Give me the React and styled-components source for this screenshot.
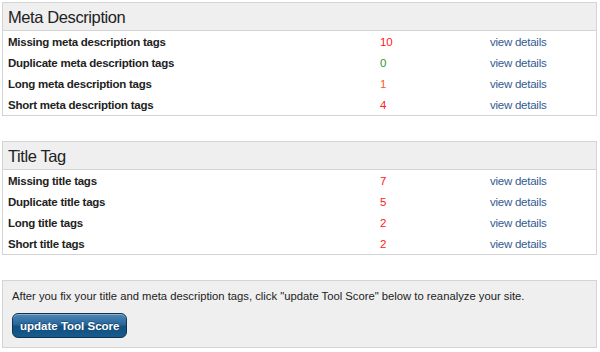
import React from "react";
import styled, { createGlobalStyle } from "styled-components";

const Global = createGlobalStyle`
  html, body { margin: 0; padding: 0; background: #fff; }
  body { font-family: "Liberation Sans", Arial, Helvetica, sans-serif; color: #222; }
`;

const Page = styled.div`
  padding: 2px 3px 0 2px;
  display: flex;
  flex-direction: column;
  gap: 25px;
`;

const Panel = styled.section`
  border: 1px solid #d4d4d4;
  background: #fff;
`;

const Header = styled.h2`
  margin: 0;
  height: 27px;
  line-height: 28px;
  padding-left: 5px;
  font-size: 16.5px;
  letter-spacing: -0.4px;
  font-weight: normal;
  color: #222;
  background: #efefef;
  border-bottom: 1px solid #d4d4d4;
`;

const Row = styled.div`
  display: grid;
  grid-template-columns: 372px 110px 1fr;
  height: 21px;
  align-items: center;
  padding-left: 5px;
  font-size: 11.5px;
  letter-spacing: -0.25px;
`;

const Label = styled.span`
  font-weight: bold;
  color: #222;
`;

const Count = styled.span`
  color: ${(p) => p.$color};
`;

const Link = styled.a`
  color: #335a90;
  text-decoration: none;
`;

const Footer = styled.div`
  border: 1px solid #d4d4d4;
  background: #efefef;
  padding: 9px 9px 9px 9px;
  font-size: 11.25px;
  display: flex;
  flex-direction: column;
  align-items: flex-start;
  gap: 11px;
`;

const Button = styled.button`
  font-family: inherit;
  font-size: 11.5px;
  font-weight: bold;
  color: #fff;
  height: 25px;
  padding: 0 7px;
  border: 1px solid #0b3457;
  border-radius: 6px;
  background: linear-gradient(#4f86b6 0%, #27679c 45%, #124f7f 55%, #175b8d 100%);
  box-shadow: inset 0 1px 0 rgba(255,255,255,0.35);
  text-shadow: 0 -1px 0 rgba(0,0,0,0.3);
  cursor: pointer;
`;

const colors = { red: "#ff2020", green: "#2e9a1e", orange: "#ff5a2a" };

const sections = [
  {
    title: "Meta Description",
    rows: [
      ["Missing meta description tags", "10", colors.red],
      ["Duplicate meta description tags", "0", colors.green],
      ["Long meta description tags", "1", colors.orange],
      ["Short meta description tags", "4", colors.red],
    ],
  },
  {
    title: "Title Tag",
    rows: [
      ["Missing title tags", "7", colors.red],
      ["Duplicate title tags", "5", colors.red],
      ["Long title tags", "2", colors.red],
      ["Short title tags", "2", colors.red],
    ],
  },
];

export default function App() {
  return (
    <>
      <Global />
      <Page>
        {sections.map((s) => (
          <Panel key={s.title}>
            <Header>{s.title}</Header>
            {s.rows.map(([label, n, c]) => (
              <Row key={label}>
                <Label>{label}</Label>
                <Count $color={c}>{n}</Count>
                <Link href="#">view details</Link>
              </Row>
            ))}
          </Panel>
        ))}
        <Footer>
          <span>
            After you fix your title and meta description tags, click "update Tool Score" below to reanalyze your site.
          </span>
          <Button>update Tool Score</Button>
        </Footer>
      </Page>
    </>
  );
}
